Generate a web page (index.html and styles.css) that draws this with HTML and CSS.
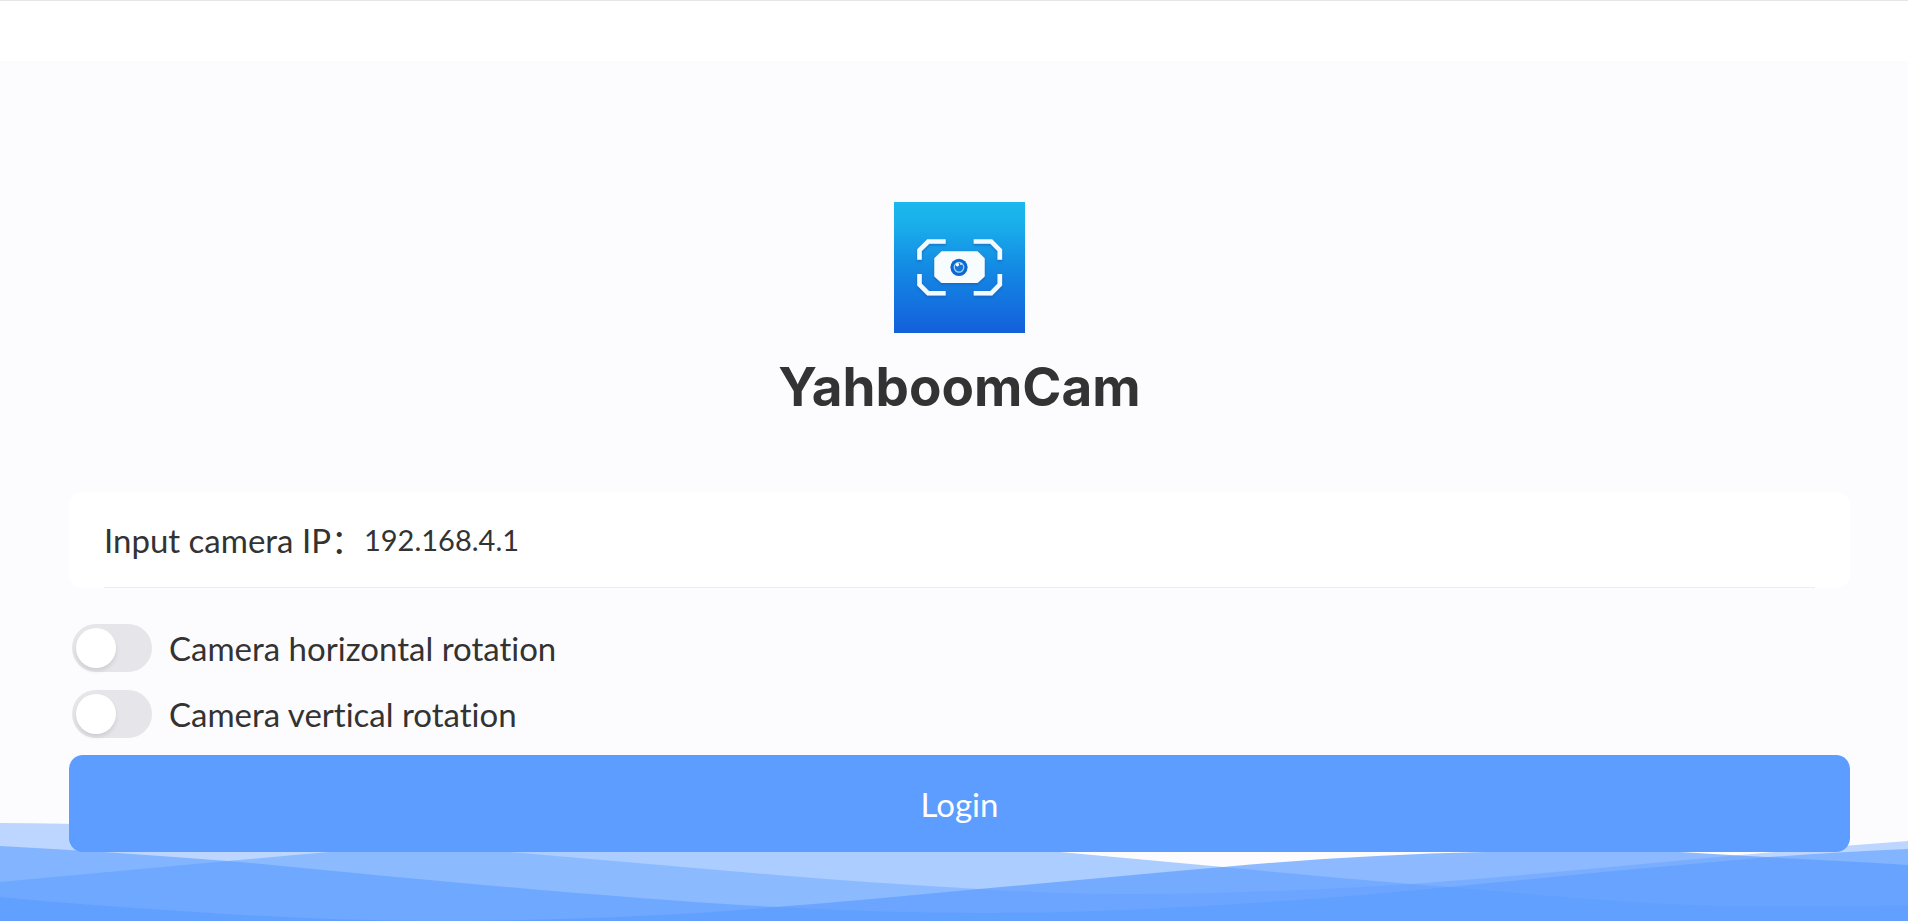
FILE: index.html
```
<!DOCTYPE html>
<html lang="en">
<head>
<meta charset="utf-8">
<title>YahboomCam</title>
<meta name="viewport" content="width=device-width, initial-scale=1">
<link rel="stylesheet" href="styles.css">
</head>
<body>
<header class="navbar"></header>

<main class="login">
 <div class="brand">
  <svg class="logo" viewBox="0 0 131 131" aria-hidden="true">
   <defs>
    <linearGradient id="logoBg" x1="0" y1="0" x2="0" y2="1">
     <stop offset="0" stop-color="#1bb8ec"/>
     <stop offset=".15" stop-color="#1ab1eb"/>
     <stop offset=".5" stop-color="#138ae4"/>
     <stop offset="1" stop-color="#145fdb"/>
    </linearGradient>
    <filter id="logoShadow" x="-20%" y="-20%" width="140%" height="150%">
     <feDropShadow dx="0" dy="1.5" stdDeviation="1.2" flood-color="#0a4fae" flood-opacity=".55"/>
    </filter>
   </defs>
   <rect width="131" height="131" fill="url(#logoBg)"/>
   <g filter="url(#logoShadow)">
    <path d="M51.7 39.5H34.2L25.5 48.2V57.7M79.7 39.5H97.2L105.8 48.2V57.7M25.5 72V82.5L34.2 91.3H51.7M105.8 72V82.5L97.2 91.3H79.7" fill="none" stroke="#f0faff" stroke-width="4.6"/>
    <path d="M47.5 49.3H83.5L90.7 56.3V74.5L83.5 81H47.5L40.3 74.5V56.3Z" fill="#f7fcff"/>
   </g>
   <circle cx="65" cy="65.3" r="8.6" fill="#0b68d2"/>
   <circle cx="65" cy="65.3" r="4.8" fill="#1474d8" stroke="#9ad4f8" stroke-width="1.3"/>
   <circle cx="63.4" cy="62.8" r="1.7" fill="#fff"/>
   <circle cx="67" cy="62" r="1" fill="#d5efff"/>
  </svg>
  <h1 class="title">YahboomCam</h1>
 </div>

 <form class="form" onsubmit="return false;">
  <div class="field">
   <div class="field-row">
    <label for="ip">Input camera IP：</label>
    <input type="text" id="ip" value="192.168.4.1">
   </div>
  </div>

  <div class="option">
   <input type="checkbox" role="switch" class="switch" id="flipH">
   <label for="flipH">Camera horizontal rotation</label>
  </div>
  <div class="option">
   <input type="checkbox" role="switch" class="switch" id="flipV">
   <label for="flipV">Camera vertical rotation</label>
  </div>

  <button type="submit" class="action">Login</button>
 </form>
</main>

<!-- Waves behind the form -->
<svg class="waves" viewBox="0 823 1908 98" preserveAspectRatio="none" aria-hidden="true">
 <path class="wave-1" d="M0 823C170 823 340 838 510 852C666 865 823 881 979 889C1028 892 1077 894 1126 894C1221 894 1316 890 1411 884C1521 876 1630 865 1740 855C1796 850 1852 845 1908 841V921H0Z"/>
 <path class="wave-2" d="M0 882C76 875 152 868 228 861C262 858 296 855 330 852C570 832 820 832 1060 852C1114 857 1169 862 1223 867C1286 873 1348 879 1411 884C1423 885 1436 886 1448 887C1549 895 1649 906 1750 906C1803 906 1855 906 1908 905V921H0Z"/>
 <path class="wave-3" d="M0 846C76 850 152 855 228 861C299 867 369 875 440 881C507 887 573 893 640 898C757 907 873 913 990 913C1083 913 1175 908 1268 902C1328 898 1388 893 1448 887C1551 877 1655 867 1758 858C1808 854 1858 851 1908 849V921H0Z"/>
 <path class="wave-4" d="M0 897C60 903 120 907 180 911C267 917 353 921 440 921C507 921 573 919 640 916C685 914 730 911 775 907C843 902 911 895 979 889C1060 882 1142 874 1223 867C1310 859 1397 854 1484 852C1549 848 1615 848 1680 852C1756 857 1832 860 1908 865V921H0Z"/>
</svg>
</body>
</html>
```
FILE: styles.css
```
/* ---------- Base layout ---------- */
:root{
 --bg:#fcfcff;
 --text:#333333;
 --accent:#5c9dff;
}
*{box-sizing:border-box}
body{margin:0;min-height:100vh;position:relative;background:var(--bg);color:var(--text);font-family:Lato,"Noto Sans CJK SC",sans-serif;font-size:33px;line-height:40px;font-variant-ligatures:none}
.navbar{height:61px;background:#fff;border-top:1px solid #e6e6e6}

/* ---------- Login ---------- */
.login{position:relative;z-index:1;padding:141px 58px 69px 69px}
.brand{display:flex;flex-direction:column;align-items:center}
.logo{display:block;width:131px;height:131px}
.title{margin:22px 0 73px;font-family:Inter,sans-serif;font-size:53px;line-height:64px;font-weight:700}
.form{display:flex;flex-direction:column}
.field{margin-bottom:27px;padding:0 35px;background:#fff;border-radius:14px}
.field-row{display:flex;align-items:center;height:96px;border-bottom:1px solid #ededf0}
.field input{flex:1;min-width:0;padding:0;border:0;outline:0;background:none;color:inherit;font:inherit;font-size:29px}

/* ---------- Switches ---------- */
.option{display:flex;align-items:center;gap:17px;height:66px;padding-left:3px}
.switch{appearance:none;flex:none;display:flex;align-items:center;width:80px;height:48px;margin:0;padding:4px;border-radius:24px;background:#e5e5ea;cursor:pointer}
.switch::before{content:"";width:40px;height:40px;border-radius:50%;background:#fff;box-shadow:0 3px 4px rgba(0,0,0,.1)}
.switch:checked{background:var(--accent);justify-content:flex-end}

.action{height:97px;margin-top:8px;border:0;border-radius:14px;background:var(--accent);color:#fff;font:inherit;cursor:pointer}

/* ---------- Waves ---------- */
.waves{position:absolute;left:0;bottom:0;width:100%;height:98px;fill:var(--accent)}
.wave-1{opacity:.4}
.wave-2{opacity:.5}
.wave-3{opacity:.6}
.wave-4{opacity:.7}
```
